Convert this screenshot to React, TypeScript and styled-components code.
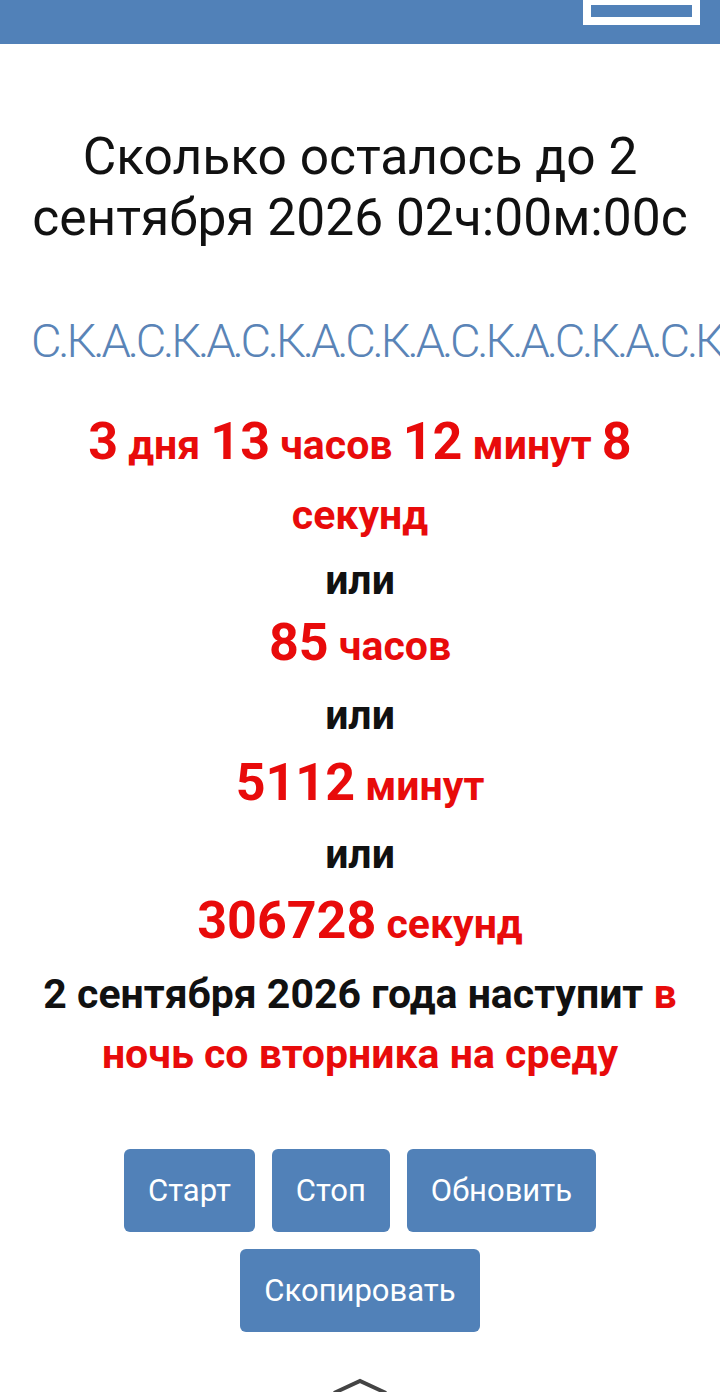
import styled, { createGlobalStyle } from 'styled-components';

const GlobalStyle = createGlobalStyle`
  html, body {
    margin: 0;
    padding: 0;
    background: #fff;
  }
  body {
    font-family: Roboto, "Noto Sans", sans-serif;
    overflow: hidden;
  }
`;

type Part = { text: string; big?: boolean };

const Page = styled.div`
  width: 720px;
  min-height: 1392px;
  display: flex;
  flex-direction: column;
  align-items: center;
  overflow: hidden;
`;

const Header = styled.header`
  width: 100%;
  height: 44px;
  background: #5181b8;
  display: flex;
  justify-content: flex-end;
  align-items: flex-start;
  padding-right: 20px;
  box-sizing: border-box;
`;

const MenuBox = styled.div`
  width: 101px;
  height: 12px;
  border: solid #fff;
  border-width: 5px 8px 8px 8px;
  background: #5181b8;
`;

const Title = styled.h1`
  margin: 82px 0 0;
  padding: 0 14px;
  font-size: 51.5px;
  line-height: 61px;
  font-weight: 400;
  color: #111;
  text-align: center;
`;

const Marquee = styled.div`
  margin-top: 62px;
  width: 100%;
  box-sizing: border-box;
  padding-left: 31px;
  white-space: nowrap;
  overflow: hidden;
  font-size: 47px;
  line-height: 62px;
  font-weight: 300;
  color: #5a84b7;
  letter-spacing: -3.15px;
`;

const Result = styled.section`
  margin-top: 38px;
  width: 100%;
  display: flex;
  flex-direction: column;
  align-items: center;
`;

const Line = styled.p<{ $lh: number; $red?: boolean }>`
  margin: 0;
  text-align: center;
  font-weight: 700;
  font-size: 41px;
  line-height: ${(p) => p.$lh}px;
  color: ${(p) => (p.$red ? '#e80b0b' : '#111')};
  padding: 0 30px;
`;

const Num = styled.span`
  font-size: 52px;
  line-height: 1;
`;

const Red = styled.span`
  color: #e80b0b;
`;

const Buttons = styled.div`
  margin-top: 65px;
  width: 480px;
  display: flex;
  flex-wrap: wrap;
  justify-content: center;
  gap: 17px;
`;

const Button = styled.button`
  height: 83px;
  padding: 0 24px;
  border: none;
  border-radius: 6px;
  background: #5181b8;
  color: #fff;
  font-family: Roboto, sans-serif;
  font-size: 31px;
  font-weight: 400;
  cursor: pointer;
`;

const UpArrow = styled.svg`
  margin-top: 45px;
  display: block;
`;

const renderParts = (parts: Part[]) =>
  parts.map((p, i) => (p.big ? <Num key={i}>{p.text}</Num> : <span key={i}>{p.text}</span>));

export default function App() {
  const marquee = 'С.К.А.'.repeat(8);
  return (
    <Page>
      <GlobalStyle />
      <Header>
        <MenuBox />
      </Header>
      <Title>
        Сколько осталось до 2 сентября 2026 02ч:00м:00с
      </Title>
      <Marquee>{marquee}</Marquee>
      <Result>
        <Line $lh={70} $red>
          {renderParts([
            { text: '3', big: true },
            { text: ' дня ' },
            { text: '13', big: true },
            { text: ' часов ' },
            { text: '12', big: true },
            { text: ' минут ' },
            { text: '8', big: true },
            { text: ' секунд' },
          ])}
        </Line>
        <Line $lh={60}>или</Line>
        <Line $lh={72} $red>
          {renderParts([{ text: '85', big: true }, { text: ' часов' }])}
        </Line>
        <Line $lh={66}>или</Line>
        <Line $lh={76} $red>
          {renderParts([{ text: '5112', big: true }, { text: ' минут' }])}
        </Line>
        <Line $lh={60}>или</Line>
        <Line $lh={80} $red>
          {renderParts([{ text: '306728', big: true }, { text: ' секунд' }])}
        </Line>
        <Line $lh={60}>
          2 сентября 2026 года наступит <Red>в ночь со вторника на среду</Red>
        </Line>
      </Result>
      <Buttons>
        <Button>Старт</Button>
        <Button>Стоп</Button>
        <Button>Обновить</Button>
        <Button>Скопировать</Button>
      </Buttons>
      <UpArrow width="56" height="20" viewBox="0 0 56 20">
        <path d="M2 16 L28 4 L54 16" fill="none" stroke="#444" strokeWidth="4" />
      </UpArrow>
    </Page>
  );
}
